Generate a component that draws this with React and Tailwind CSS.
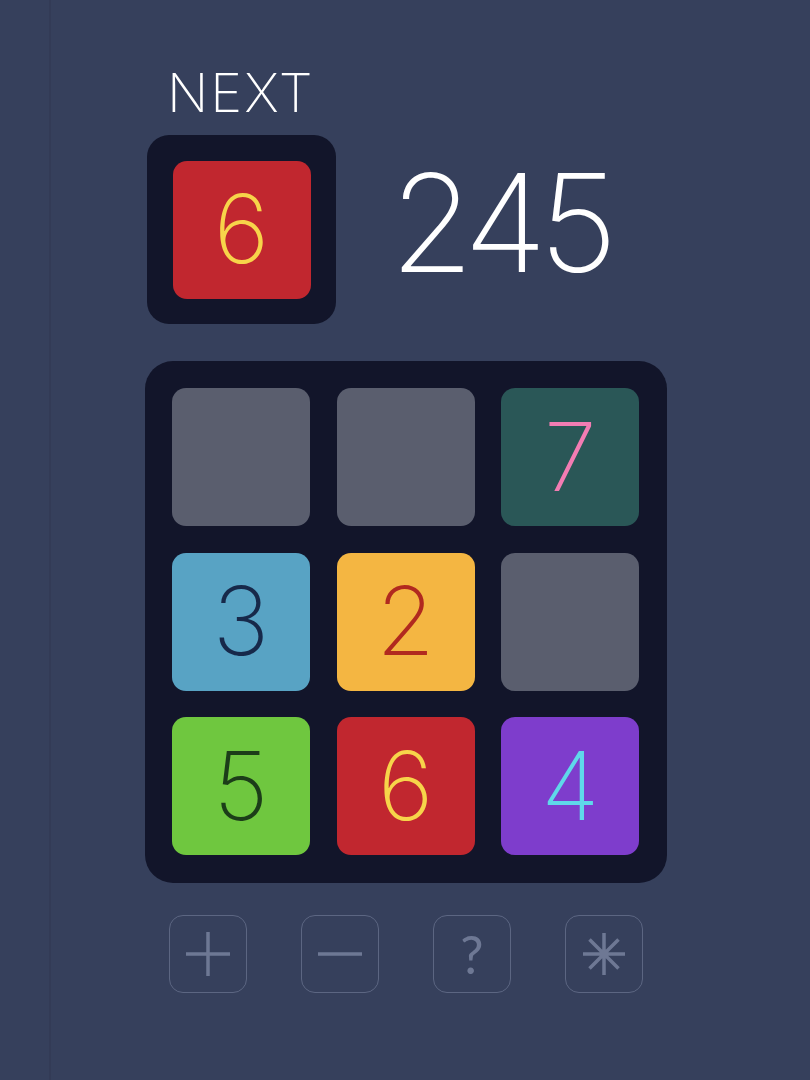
import React from "react";

const F = { fontFamily: '"Inter", "Lato", sans-serif' };

function Tile({ bg, fg, n }) {
  return (
    <div className={`w-[138px] h-[138px] rounded-[14px] flex items-center justify-center ${bg}`}>
      {n ? (
        <span className={`-mt-[2px] text-[95px] leading-none font-extralight ${fg}`} style={F}>{n}</span>
      ) : null}
    </div>
  );
}

function Btn({ children }) {
  return (
    <div className="w-[78px] h-[78px] rounded-[14px] border-[1.5px] border-[#5c6682] flex items-center justify-center">
      {children}
    </div>
  );
}

const ic = "#6e7894";

export default function App() {
  return (
    <div className="w-[810px] h-[1080px] bg-[#36405c] flex overflow-hidden">
      <div className="w-[51px] border-r-2 border-[#333b56]"></div>
      <div className="flex flex-col pl-[94px] pt-[66px]">
        <div className="pl-[22px] text-[54px] leading-none font-extralight text-white tracking-[2px]" style={F}>NEXT</div>
        <div className="flex items-start mt-[15px]">
          <div className="ml-[2px] w-[189px] h-[189px] rounded-[22px] bg-[#12152a] flex items-center justify-center">
            <Tile bg="bg-[#c1272f]" fg="text-[#f7d44a]" n="6" />
          </div>
          <div className="ml-[54px] mt-[20px] text-[136px] leading-none font-extralight text-white tracking-[-8px]" style={F}>245</div>
        </div>
        <div className="mt-[37px] w-[522px] h-[522px] rounded-[28px] bg-[#12152a] p-[27px] grid grid-cols-3 gap-[26px]">
          <Tile bg="bg-[#5a5e6e]" />
          <Tile bg="bg-[#5a5e6e]" />
          <Tile bg="bg-[#2a5757]" fg="text-[#f37cb3]" n="7" />
          <Tile bg="bg-[#58a3c4]" fg="text-[#17294a]" n="3" />
          <Tile bg="bg-[#f4b642]" fg="text-[#b1291f]" n="2" />
          <Tile bg="bg-[#5a5e6e]" />
          <Tile bg="bg-[#6fc73f]" fg="text-[#1c3d19]" n="5" />
          <Tile bg="bg-[#c1272f]" fg="text-[#f7d44a]" n="6" />
          <Tile bg="bg-[#7e3dcc]" fg="text-[#5fd8ea]" n="4" />
        </div>
        <div className="flex mt-[32px] pl-[24px] gap-[54px]">
          <Btn>
            <svg width="46" height="46" viewBox="0 0 46 46"><path d="M23 1V45M1 23H45" stroke={ic} strokeWidth="3.5" /></svg>
          </Btn>
          <Btn>
            <svg width="46" height="46" viewBox="0 0 46 46"><path d="M1 23H45" stroke={ic} strokeWidth="3.5" /></svg>
          </Btn>
          <Btn>
            <span className="text-[52px] leading-none font-normal text-[#6e7894]" style={{ fontFamily: '"Lato", sans-serif' }}>?</span>
          </Btn>
          <Btn>
            <svg width="46" height="46" viewBox="0 0 46 46"><path d="M23 2V44M2 23H44M8.5 8.5L37.5 37.5M37.5 8.5L8.5 37.5" stroke={ic} strokeWidth="3.5" /></svg>
          </Btn>
        </div>
      </div>
    </div>
  );
}
